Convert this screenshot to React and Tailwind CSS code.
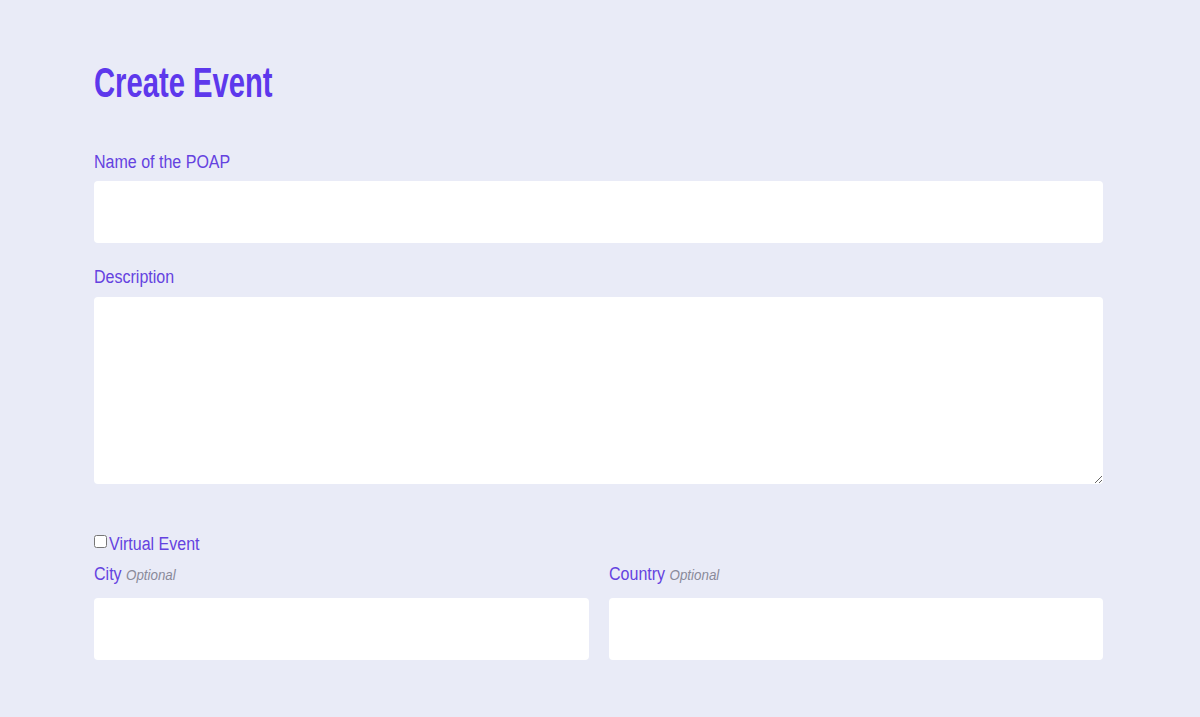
const labelText = 'inline-block origin-left scale-x-[0.89] text-[18px] leading-[22px] text-[#6442e0]';

export default function App() {
  return (
    <div
      className="min-h-[717px] bg-[#e9ebf7] pl-[94px] pr-[97px] pt-[59px] pb-10"
      style={{ fontFamily: '"Liberation Sans", Arial, sans-serif' }}
    >
      <h1 className="inline-block origin-left scale-x-[0.695] text-[42px] font-bold leading-[48px] text-[#5d38ec]">
        Create Event
      </h1>

      <form className="mt-[44px] flex flex-col">
        <label className="flex" htmlFor="name">
          <span className={labelText}>Name of the POAP</span>
        </label>
        <input id="name" type="text" className="mt-[8px] h-[62px] w-full rounded-[4px] bg-white px-3 outline-none" />

        <label className="mt-[23px] flex" htmlFor="description">
          <span className={labelText}>Description</span>
        </label>
        <textarea
          id="description"
          className="mt-[9px] h-[187px] w-full resize-y rounded-[4px] bg-white px-3 py-2 outline-none"
        />

        <div className="mt-[49px] flex items-start">
          <input id="virtual" type="checkbox" className="mt-[2px] h-[13px] w-[13px]" />
          <label htmlFor="virtual" className="ml-[2px] flex">
            <span className={labelText}>Virtual Event</span>
          </label>
        </div>

        <div className="mt-[8px] grid grid-cols-2 gap-[20px]">
          <div className="flex flex-col">
            <label className="flex">
              <span className={labelText}>
                City <span className="text-[15px] italic text-[#8a8a9a]">Optional</span>
              </span>
            </label>
            <input type="text" className="mt-[12px] h-[62px] w-full rounded-[4px] bg-white px-3 outline-none" />
          </div>
          <div className="flex flex-col">
            <label className="flex">
              <span className={labelText}>
                Country <span className="text-[15px] italic text-[#8a8a9a]">Optional</span>
              </span>
            </label>
            <input type="text" className="mt-[12px] h-[62px] w-full rounded-[4px] bg-white px-3 outline-none" />
          </div>
        </div>
      </form>
    </div>
  );
}
